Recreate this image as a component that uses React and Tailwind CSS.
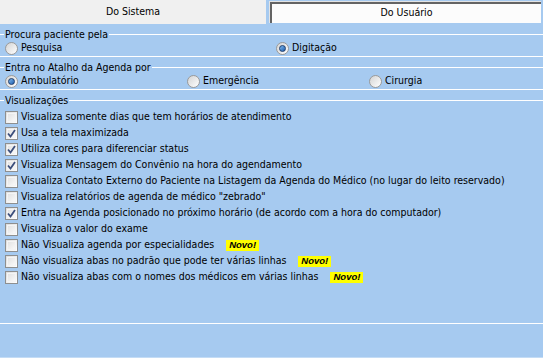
import React from "react";

const font = { fontFamily: '"DejaVu Sans Condensed", "DejaVu Sans", sans-serif' };

/* ================= CONTROLS ================= */

const CheckBox = ({ checked }) => (
  <div className="relative h-[13px] w-[13px] shrink-0 border border-[#8e8f8f] bg-gradient-to-br from-[#dcdcdc] to-[#ffffff]">
    <div className="absolute inset-[1px] border border-[#f4f4f4]" />
    {checked && (
      <svg className="absolute left-[1px] top-[1px]" width="9" height="9" viewBox="0 0 9 9">
        <path d="M1 4.5 L3.5 7.5 L8 1" fill="none" stroke="#3c4f7c" strokeWidth="1.8" />
      </svg>
    )}
  </div>
);

const Radio = ({ checked }) => (
  <div className="relative flex h-[13px] w-[13px] shrink-0 items-center justify-center rounded-full border border-[#9a9a9a] bg-gradient-to-br from-[#d4d4d4] to-[#ffffff]">
    {checked && (
      <div className="h-[7px] w-[7px] rounded-full border border-[#1c3d6e] bg-gradient-to-br from-[#7fb8ec] to-[#1f5fae]" />
    )}
  </div>
);

const GroupTitle = ({ children }) => (
  <div className="flex h-[12px] items-center">
    <div className="h-px w-[4px] bg-white" />
    <span className="px-[1px] leading-none">{children}</span>
    <div className="h-px flex-1 bg-white" />
  </div>
);

const RadioItem = ({ label, checked, width }) => (
  <div className={`flex items-center gap-[3px] ${width}`}>
    <Radio checked={checked} />
    <span>{label}</span>
  </div>
);

const Novo = () => (
  <span
    className="ml-[9px] inline-flex h-[11px] items-center bg-[#ffff00] px-[3px] text-[9.5px] font-bold italic leading-none text-black"
    style={{ fontFamily: '"Liberation Sans", Arial, sans-serif' }}
  >
    Novo!
  </span>
);

const options = [
  { label: "Visualiza somente dias que tem horários de atendimento", checked: false },
  { label: "Usa a tela maximizada", checked: true },
  { label: "Utiliza cores para diferenciar status", checked: true },
  { label: "Visualiza Mensagem do Convênio na hora do agendamento", checked: true },
  { label: "Visualiza Contato Externo do Paciente na Listagem da Agenda do Médico (no lugar do leito reservado)", checked: false },
  { label: 'Visualiza relatórios de agenda de médico "zebrado"', checked: false },
  { label: "Entra na Agenda posicionado no próximo horário (de acordo com a hora do computador)", checked: true },
  { label: "Visualiza o valor do exame", checked: false },
  { label: "Não Visualiza agenda por especialidades", checked: false, novo: true },
  { label: "Não visualiza abas no padrão que pode ter várias linhas", checked: false, novo: true },
  { label: "Não visualiza abas com o nomes dos médicos em várias linhas", checked: false, novo: true },
];

/* ================= UI ================= */

export default function App() {
  return (
    <div className="flex h-[358px] w-[543px] flex-col overflow-hidden bg-[#a6caf0] text-[10.5px] text-black" style={font}>
      {/* TABS */}
      <div className="flex h-[24px] shrink-0">
        <div className="flex w-[266px] items-center justify-center bg-[#f0f0f0]">Do Sistema</div>
        <div className="ml-[3px] mt-[1px] h-[22px] w-[272px] border-l border-t border-[#e3e3e3]">
          <div className="flex h-full items-center justify-center border-l-2 border-t-2 border-[#646464] bg-[#fcfcfc] pb-[1px]">
            Do Usuário
          </div>
        </div>
      </div>

      {/* PROCURA */}
      <div className="mt-[4px]">
        <GroupTitle>Procura paciente pela</GroupTitle>
        <div className="flex h-[16px] items-center pl-[5px]">
          <RadioItem label="Pesquisa" width="w-[271px]" />
          <RadioItem label="Digitação" checked />
        </div>
        <div className="h-px bg-white" />
      </div>

      {/* ATALHO */}
      <div className="mt-[4px]">
        <GroupTitle>Entra no Atalho da Agenda por</GroupTitle>
        <div className="flex h-[16px] items-center pl-[5px]">
          <RadioItem label="Ambulatório" checked width="w-[182px]" />
          <RadioItem label="Emergência" width="w-[182px]" />
          <RadioItem label="Cirurgia" />
        </div>
        <div className="h-px bg-white" />
      </div>

      {/* VISUALIZAÇÕES */}
      <div className="mt-[4px] flex h-[230px] flex-col">
        <GroupTitle>Visualizações</GroupTitle>
        <div className="mt-[3px] flex flex-1 flex-col pl-[5px]">
          {options.map((o) => (
            <div key={o.label} className="flex h-[16px] items-center gap-[3px]">
              <CheckBox checked={o.checked} />
              <span className="whitespace-nowrap">{o.label}</span>
              {o.novo && <Novo />}
            </div>
          ))}
        </div>
        <div className="h-px bg-white" />
      </div>

      <div className="flex-1 border-b border-[#c4dcf5]" />
    </div>
  );
}
